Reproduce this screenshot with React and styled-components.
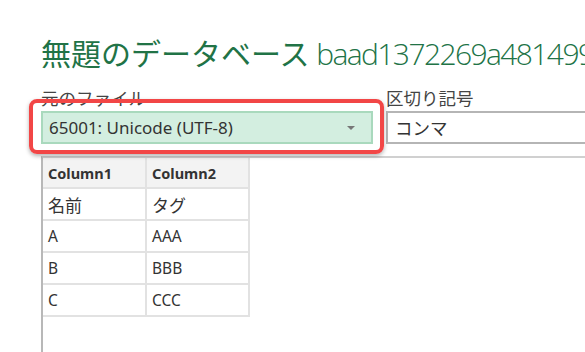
import React from 'react'
import styled, { createGlobalStyle } from 'styled-components'

const GlobalStyle = createGlobalStyle`
  html, body {
    margin: 0;
    padding: 0;
    background: #fff;
    overflow: hidden;
  }
  body {
    font-family: "Segoe UI", "Noto Sans", "Noto Sans CJK JP", sans-serif;
    color: #333;
  }
`

const rows = [
    ['名前', 'タグ'],
    ['A', 'AAA'],
    ['B', 'BBB'],
    ['C', 'CCC'],
]

function App(){
    return(
        <PageStyled>
            <GlobalStyle />
            <Title>無題のデータベース <span>baad1372269a481499d0</span></Title>
            <Fields>
                <Field width="332px">
                    <Label>元のファイル</Label>
                    <SelectBox>
                        <span>65001: Unicode (UTF-8)</span>
                        <Caret />
                        <Highlight />
                    </SelectBox>
                </Field>
                <Field grow>
                    <Label>区切り記号</Label>
                    <InputBox>コンマ</InputBox>
                </Field>
            </Fields>
            <Preview>
                <Table>
                    <thead>
                        <tr>
                            <th>Column1</th>
                            <th>Column2</th>
                        </tr>
                    </thead>
                    <tbody>
                        {rows.map((r, i) => (
                            <tr key={i}>
                                <td>{r[0]}</td>
                                <td>{r[1]}</td>
                            </tr>
                        ))}
                    </tbody>
                </Table>
            </Preview>
        </PageStyled>
    )
}

const PageStyled = styled.div`
width: 585px;
height: 352px;
overflow: hidden;
padding-left: 41px;
box-sizing: border-box;
`

const Title = styled.h1`
margin: 0;
padding-top: 33px;
font-family: "Noto Sans CJK JP", sans-serif;
font-weight: 400;
font-size: 30px;
line-height: 38px;
color: #217346;
white-space: nowrap;
span{
    font-family: "Open Sans", "Noto Sans", sans-serif;
    font-weight: 300;
    letter-spacing: -1.6px;
}
`

const Fields = styled.div`
display: flex;
gap: 13px;
margin-top: 12px;
`

const Field = styled.div`
display: flex;
flex-direction: column;
width: ${p => p.width || 'auto'};
flex: ${p => p.grow ? '1 0 auto' : '0 0 auto'};
min-width: 0;
`

const Label = styled.div`
font-family: "Noto Sans CJK JP", sans-serif;
font-size: 17.5px;
line-height: 26px;
color: #444;
height: 26px;
`

const SelectBox = styled.div`
position: relative;
height: 33px;
box-sizing: border-box;
border: 2px solid #a9d9bd;
background: #d3eee0;
display: flex;
align-items: center;
padding: 0 6px;
font-family: "Noto Sans", "Noto Sans CJK JP", sans-serif;
font-size: 17px;
color: #333;
span{
    flex: 1;
}
`

const Caret = styled.div`
width: 0;
height: 0;
border-left: 4px solid transparent;
border-right: 4px solid transparent;
border-top: 4px solid #777;
margin-right: 10px;
`

const Highlight = styled.div`
position: absolute;
left: -14px;
right: -13px;
top: -14px;
bottom: -12px;
border: 4px solid #f24646;
border-radius: 8px;
box-shadow: 0 2px 4px rgba(0,0,0,0.3);
pointer-events: none;
`

const InputBox = styled.div`
height: 33px;
box-sizing: border-box;
border: 2px solid #b5b5b5;
border-right: none;
display: flex;
align-items: center;
padding: 0 7px;
font-family: "Noto Sans CJK JP", sans-serif;
font-size: 17.5px;
color: #333;
`

const Preview = styled.div`
margin-top: 12px;
border-top: 2px solid #d0d0d0;
border-left: 2px solid #b8b8b8;
height: 200px;
`

const Table = styled.table`
border-collapse: collapse;
font-family: "Noto Sans", "Noto Sans CJK JP", sans-serif;
color: #333;
th, td{
    border: 2px solid #e2e2e2;
    text-align: left;
    padding: 0 5px;
    box-sizing: border-box;
}
th{
    width: 103px;
    height: 30px;
    background: #f3f3f3;
    font-size: 14.5px;
    font-weight: 700;
    border-top: none;
    border-left: none;
}
td{
    height: 32px;
    font-size: 15.5px;
}
td:first-child{
    border-left: none;
}
tbody tr:first-child td{
    font-family: "Noto Sans CJK JP", sans-serif;
    font-size: 17px;
}
`

export default App;
